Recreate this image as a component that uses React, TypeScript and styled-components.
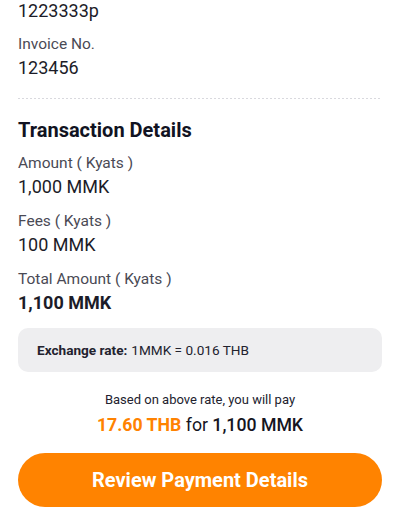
import styled, { createGlobalStyle } from "styled-components";

const GlobalStyle = createGlobalStyle`
    body {
        margin: 0;
        background: #ffffff;
        font-family: Roboto, "Noto Sans", sans-serif;
    }
`;

const Container = styled.div`
    width: 400px;
    height: 520px;
    overflow: hidden;
    padding: 0 18px;
    box-sizing: border-box;
`;

const Page = styled.div`
    margin-top: -1px;
`;

const Field = styled.div<{ $gap?: number }>`
    margin-top: ${(props) => props.$gap ?? 0}px;
`;

const Label = styled.div`
    font-size: 15.5px;
    line-height: 24px;
    color: #4a4a55;
`;

const Value = styled.div<{ $bold?: boolean }>`
    font-size: 18px;
    line-height: 24px;
    color: #1c1c28;
    font-weight: ${(props) => (props.$bold ? 700 : 400)};
`;

const Divider = styled.div`
    height: 1px;
    margin: 18px 0 17px;
    background-image: repeating-linear-gradient(
        to right,
        #d9d9de 0 2px,
        transparent 2px 4px
    );
`;

const SectionTitle = styled.h2`
    margin: 0 0 7px;
    font-size: 20px;
    line-height: 28px;
    font-weight: 700;
    color: #111322;
`;

const RateBox = styled.div`
    margin-top: 13px;
    height: 44px;
    border-radius: 10px;
    background: #eeeef0;
    display: flex;
    align-items: center;
    padding: 0 19px;
    font-size: 13.6px;
    color: #22222e;
    b {
        font-weight: 700;
        margin-right: 4px;
    }
`;

const Summary = styled.div`
    margin-top: 18px;
    text-align: center;
`;

const Note = styled.div`
    font-size: 13px;
    line-height: 20px;
    color: #22222e;
`;

const PayLine = styled.div`
    margin-top: 2px;
    font-size: 17.7px;
    line-height: 26px;
    color: #15151f;
    font-weight: 500;
`;

const Accent = styled.span`
    color: #ff8200;
    font-weight: 700;
`;

const Plain = styled.span`
    font-weight: 400;
`;

const ReviewButton = styled.button`
    display: block;
    width: 100%;
    height: 54px;
    margin-top: 15px;
    border: none;
    border-radius: 27px;
    background: #ff8300;
    color: #ffffff;
    font-family: Roboto, "Noto Sans", sans-serif;
    font-size: 20px;
    font-weight: 700;
    cursor: pointer;
`;

const details = [
    { label: "Amount ( Kyats )", value: "1,000 MMK" },
    { label: "Fees ( Kyats )", value: "100 MMK" },
    { label: "Total Amount ( Kyats )", value: "1,100 MMK", bold: true },
];

function App() {
    return (
        <>
            <GlobalStyle />
            <Container>
                <Page>
                    <Value>1223333p</Value>
                    <Field $gap={9}>
                        <Label>Invoice No.</Label>
                        <Value>123456</Value>
                    </Field>
                    <Divider />
                    <SectionTitle>Transaction Details</SectionTitle>
                    {details.map((item, i) => (
                        <Field key={item.label} $gap={i === 0 ? 0 : 10}>
                            <Label>{item.label}</Label>
                            <Value $bold={item.bold}>{item.value}</Value>
                        </Field>
                    ))}
                    <RateBox>
                        <b>Exchange rate:</b> 1MMK = 0.016 THB
                    </RateBox>
                    <Summary>
                        <Note>Based on above rate, you will pay</Note>
                        <PayLine>
                            <Accent>17.60 THB</Accent> <Plain>for</Plain> 1,100 MMK
                        </PayLine>
                    </Summary>
                    <ReviewButton>Review Payment Details</ReviewButton>
                </Page>
            </Container>
        </>
    );
}

export default App;
